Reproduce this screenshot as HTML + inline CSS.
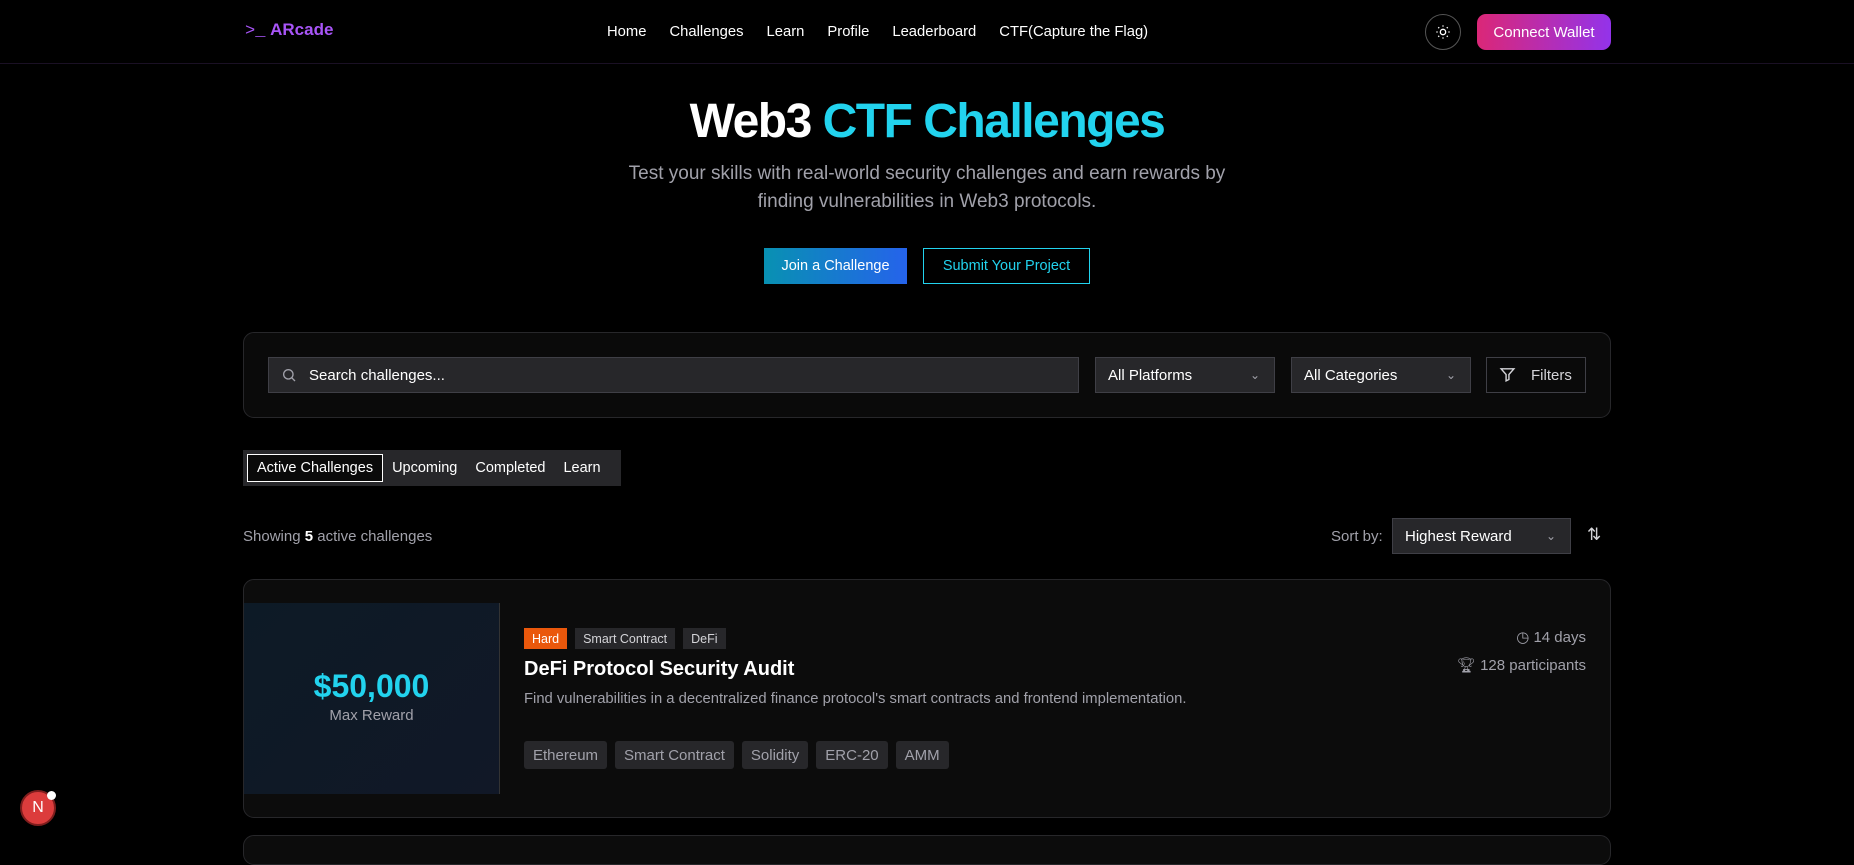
<!DOCTYPE html>
<html><head><meta charset="utf-8"><style>
*{box-sizing:border-box;margin:0;padding:0}
body{width:1854px;height:845px;overflow:hidden;background:#000;color:#fff;font-family:"Liberation Sans",sans-serif;position:relative}
.abs{position:absolute;white-space:nowrap}
nav{position:absolute;left:0;top:0;width:1854px;height:64px;border-bottom:1px solid #1a1024}
.logo{left:245px;top:20px;color:#a855f7;font-weight:bold;font-size:17px}
.links{top:24px;left:607px;font-size:14.8px;display:flex;gap:23px;color:#fff}
.theme{left:1425px;top:14px;width:36px;height:36px;border-radius:50%;border:1px solid #555;display:flex;align-items:center;justify-content:center}
.wallet{left:1477px;top:14px;width:134px;height:36px;border-radius:9px;background:linear-gradient(90deg,#db2777,#9333ea);font-size:15px;display:flex;align-items:center;justify-content:center}
h1{position:absolute;left:0;width:1854px;top:94px;text-align:center;font-size:48px;font-weight:bold;letter-spacing:-1.5px}
.sub{left:0;width:1854px;top:160px;text-align:center;font-size:19px;line-height:28px;color:#a1a1aa}
.btn1{left:764px;top:248px;width:143px;height:36px;background:linear-gradient(90deg,#0891b2,#2563eb);font-size:14.5px;display:flex;align-items:center;justify-content:center}
.btn2{left:923px;top:248px;width:167px;height:36px;border:1px solid #22d3ee;color:#22d3ee;font-size:14.5px;display:flex;align-items:center;justify-content:center}
.fbox{left:243px;top:332px;width:1368px;height:86px;border:1px solid #27272a;border-radius:11px;background:#0a0a0a}
.inp{height:36px;background:#27272a;border:1px solid #3f3f46;font-size:15px;display:flex;align-items:center;color:#fff}
.tabs{left:243px;top:450px;width:378px;height:36px;background:#27272a;font-size:14.5px;display:flex;align-items:center;padding-left:4px;gap:0}
.tab{padding:0 9px;height:28px;display:flex;align-items:center;white-space:nowrap}
.tab.a{border:1px solid #fff;background:#0a0a0a}
.card{left:243px;top:579px;width:1368px;height:239px;border:1px solid #27272a;border-radius:11px;background:#0c0c0c}
.tag{height:21px;padding:0 8px;font-size:12.5px;display:flex;align-items:center;background:#27272a;color:#d4d4d8}
.tt{height:28px;padding:0 9px;font-size:15px;display:flex;align-items:center;background:#27272a;color:#a1a1aa;border-radius:3px}
</style></head><body>
<nav>
<div class="abs logo"><span style="font-family:'Liberation Mono',monospace;font-weight:normal">&gt;_</span>&nbsp;ARcade</div>
<div class="abs links"><span>Home</span><span>Challenges</span><span>Learn</span><span>Profile</span><span>Leaderboard</span><span>CTF(Capture the Flag)</span></div>
<div class="abs theme"><svg width="16" height="16" viewBox="0 0 24 24" fill="none" stroke="#fff" stroke-width="2"><circle cx="12" cy="12" r="4"/><path d="M12 2v2M12 20v2M4.9 4.9l1.4 1.4M17.7 17.7l1.4 1.4M2 12h2M20 12h2M4.9 19.1l1.4-1.4M17.7 6.3l1.4-1.4"/></svg></div>
<div class="abs wallet">Connect Wallet</div>
</nav>
<h1>Web3 <span style="color:#22d3ee">CTF Challenges</span></h1>
<div class="abs sub">Test your skills with real-world security challenges and earn rewards by<br>finding vulnerabilities in Web3 protocols.</div>
<div class="abs btn1">Join a Challenge</div>
<div class="abs btn2">Submit Your Project</div>
<div class="abs fbox"></div>
<div class="abs inp" style="left:268px;top:357px;width:811px;padding-left:40px">Search challenges...</div>
<svg class="abs" style="left:281px;top:367px" width="16" height="16" viewBox="0 0 24 24" fill="none" stroke="#a1a1aa" stroke-width="2"><circle cx="11" cy="11" r="7"/><path d="M21 21l-5-5"/></svg>
<div class="abs inp" style="left:1095px;top:357px;width:180px;padding-left:12px">All Platforms<span style="position:absolute;right:14px;color:#a1a1aa;font-size:12px">&#8964;</span></div>
<div class="abs inp" style="left:1291px;top:357px;width:180px;padding-left:12px">All Categories<span style="position:absolute;right:14px;color:#a1a1aa;font-size:12px">&#8964;</span></div>
<div class="abs inp" style="left:1486px;top:357px;width:100px;background:#0a0a0a;color:#d4d4d8;padding-left:44px">Filters</div>
<svg class="abs" style="left:1499px;top:366px" width="17" height="17" viewBox="0 0 24 24" fill="none" stroke="#d4d4d8" stroke-width="2"><path d="M3 4h18l-7 8v7l-4 2v-9z"/></svg>
<div class="abs tabs"><div class="tab a">Active Challenges</div><div class="tab">Upcoming</div><div class="tab">Completed</div><div class="tab">Learn</div></div>
<div class="abs" style="left:243px;top:528px;font-size:15px;color:#a1a1aa">Showing <b style="color:#fff">5</b> active challenges</div>
<div class="abs" style="left:1331px;top:528px;font-size:15px;color:#a1a1aa">Sort by:</div>
<div class="abs inp" style="left:1392px;top:518px;width:179px;padding-left:12px">Highest Reward<span style="position:absolute;right:14px;color:#a1a1aa;font-size:12px">&#8964;</span></div>
<div class="abs" style="left:1587px;top:525px;font-size:17px;color:#d4d4d8">&#8645;</div>
<div class="abs card"></div>
<div class="abs" style="left:244px;top:603px;width:256px;height:191px;background:linear-gradient(135deg,#0d1a26,#111827);border-right:1px solid #333;text-align:center">
<div style="margin-top:65px;font-size:32px;font-weight:bold;color:#22d3ee">$50,000</div>
<div style="font-size:15px;color:#a1a1aa;margin-top:2px">Max Reward</div></div>
<div class="abs" style="left:524px;top:628px;display:flex;gap:8px"><div class="tag" style="background:#ea580c;color:#fff">Hard</div><div class="tag">Smart Contract</div><div class="tag">DeFi</div></div>
<div class="abs" style="left:524px;top:658px;font-size:20px;font-weight:bold">DeFi Protocol Security Audit</div>
<div class="abs" style="left:524px;top:691px;font-size:14.8px;color:#a1a1aa">Find vulnerabilities in a decentralized finance protocol's smart contracts and frontend implementation.</div>
<div class="abs" style="left:524px;top:741px;display:flex;gap:8px"><div class="tt">Ethereum</div><div class="tt">Smart Contract</div><div class="tt">Solidity</div><div class="tt">ERC-20</div><div class="tt">AMM</div></div>
<div class="abs" style="right:268px;top:628px;font-size:15px;color:#a1a1aa">&#9719; 14 days</div>
<div class="abs" style="right:268px;top:656px;font-size:15px;color:#a1a1aa">&#127942;&#xFE0E; 128 participants</div>
<div class="abs" style="left:243px;top:835px;width:1368px;height:30px;border:1px solid #27272a;border-radius:11px;background:#0c0c0c"></div>
<div class="abs" style="left:20px;top:790px;width:36px;height:36px;border-radius:50%;background:#dc3c3c;border:2px solid #7f1d1d;display:flex;align-items:center;justify-content:center;font-size:16px">N</div>
<div class="abs" style="left:47px;top:791px;width:9px;height:9px;border-radius:50%;background:#fff"></div>
</body></html>
